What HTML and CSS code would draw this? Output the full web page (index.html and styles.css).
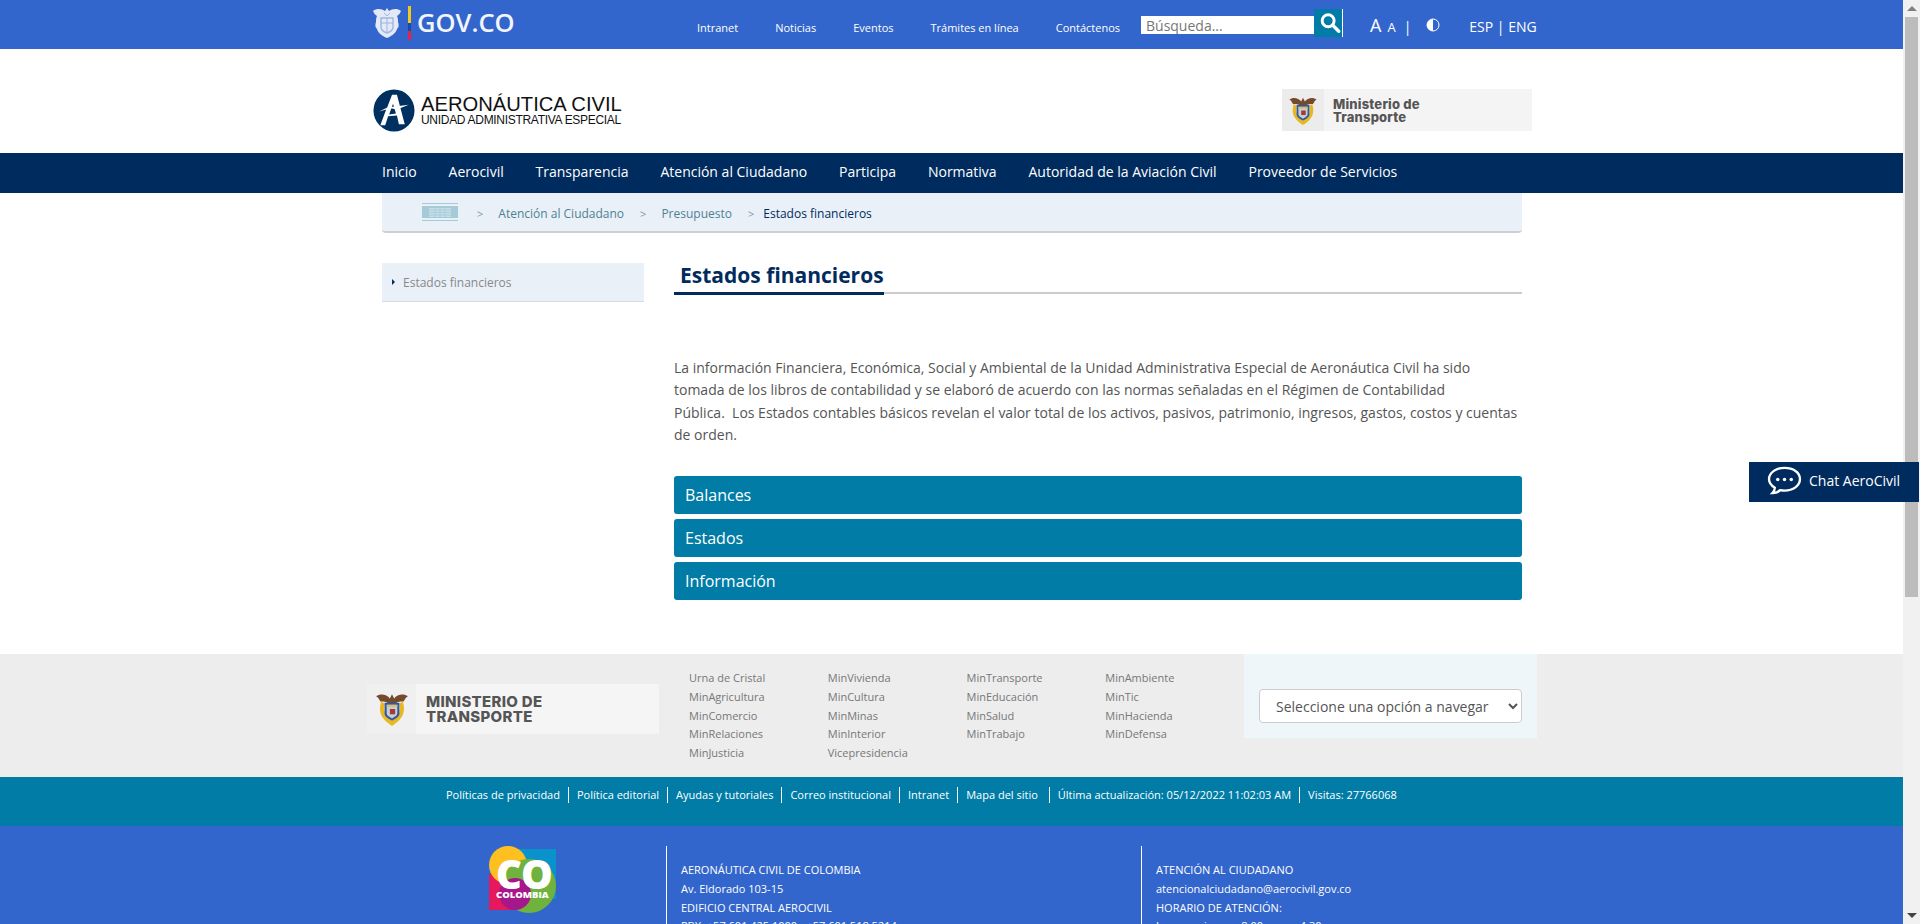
FILE: index.html
```html
<!DOCTYPE html>
<html lang="es">
<head>
    <meta charset="UTF-8">
    <title>Estados financieros - Aerocivil</title>
    <meta name="viewport" content="width=device-width, initial-scale=1">
    <link rel="stylesheet" href="styles.css">
</head>
<body>
<svg class="defs" width="0" height="0">
    <symbol id="escudo" viewBox="0 0 30 34">
        <path d="M15 3l2 4c3-4 9-5 13-2-2 1-3 3-4 5-3 0-6 0-8 2h-6c-2-2-5-2-8-2-1-2-2-4-4-5 4-3 10-2 13 2z" fill="#75492c"/>
        <path d="M5 10c-2 5-2 12 2 16 2 3 5 5 8 7 3-2 6-4 8-7 4-4 4-11 2-16l-3 2c1 5 0 10-3 13-1 1-3 2-4 3-1-1-3-2-4-3-3-3-4-8-3-13z" fill="#e8b823"/>
        <path d="M8 11h14v10c0 3-3 5-7 7-4-2-7-4-7-7z" fill="#2f5aa0"/>
        <path d="M10 13h10v8c0 2-2 3-5 5-3-2-5-3-5-5z" fill="#c9ced6"/>
        <path d="M13 17h5v5h-5z" fill="#a53a34"/>
        <path d="M10 13h10v2H10z" fill="#d9c06a"/>
    </symbol>
</svg>
<div class="page">
    <header class="top-bar">
        <div class="gov-logo">
            <svg class="gov-shield" viewBox="0 0 28 32" width="28" height="32">
                <path d="M14 1l2 3c3-2 8-3 12 0-1 2-2 4-4 5 1 2 1 4 1 6 1 3 1 5-1 7-1 4-5 7-10 9-5-2-9-5-10-9-2-2-2-4-1-7 0-2 0-4 1-6-2-1-3-3-4-5 4-3 9-2 12 0z" fill="#e4e9f6"/>
                <path d="M8 11h12v9c0 3-3 5-6 6-3-1-6-3-6-6z" fill="none" stroke="#9db5e4" stroke-width="1.400"/>
                <path d="M8 16h12M14 11v15M11 6l3 3 3-3" fill="none" stroke="#9db5e4" stroke-width="1"/>
            </svg>
            <span class="gov-stripe"></span>
            <span class="gov-text">GOV.CO</span>
        </div>
        <nav class="top-links">
            <a href="#">Intranet</a>
            <a href="#">Noticias</a>
            <a href="#">Eventos</a>
            <a href="#">Trámites en línea</a>
            <a href="#">Contáctenos</a>
        </nav>
        <form class="search">
            <input type="text" placeholder="Búsqueda...">
            <button type="button" aria-label="Buscar">
                <svg viewBox="0 0 24 24" width="22" height="22"><circle cx="10" cy="9.500" r="6.500" fill="none" stroke="#fff" stroke-width="3.200"/><path d="M15 14.500l6.500 6.500" stroke="#fff" stroke-width="3.600" stroke-linecap="round"/></svg>
            </button>
        </form>
        <div class="top-tools">
            <span class="font-big">A</span>
            <span class="font-small">A</span>
            <span class="bar">|</span>
            <svg class="contrast" viewBox="0 0 14 14" width="14" height="14"><circle cx="7" cy="7" r="6" fill="none" stroke="#fff" stroke-width="1"/><path d="M7 1a6 6 0 0 0 0 12z" fill="#fff"/></svg>
            <span class="langs">ESP <span class="lang-bar">|</span> ENG</span>
        </div>
    </header>

    <div class="brand">
        <div class="aero-logo">
            <svg viewBox="0 0 42 44" width="42" height="43">
                <ellipse cx="21" cy="22" rx="21" ry="21.500" fill="#00305f"/>
                <path d="M19 6h5l8 30h-6l-2-9-9 1-3 9H7l6-16-7 2 8-4z" fill="#fff"/>
                <path d="M20 15l3 10-7 1z" fill="#00305f"/>
                <path d="M14 19l22-3-12 5z" fill="#fff"/>
            </svg>
            <div class="aero-text">
                <div class="aero-name">AERONÁUTICA CIVIL</div>
                <div class="aero-sub">UNIDAD ADMINISTRATIVA ESPECIAL</div>
            </div>
        </div>
        <div class="min-banner">
            <span class="min-icon">
                <svg width="28" height="31"><use href="#escudo"/></svg>
            </span>
            <span class="min-label">Ministerio de<br>Transporte</span>
        </div>
    </div>

    <nav class="main-nav">
        <a href="#">Inicio</a>
        <a href="#">Aerocivil</a>
        <a href="#">Transparencia</a>
        <a href="#">Atención al Ciudadano</a>
        <a href="#">Participa</a>
        <a href="#">Normativa</a>
        <a href="#">Autoridad de la Aviación Civil</a>
        <a href="#">Proveedor de Servicios</a>
    </nav>

    <div class="breadcrumb">
        <svg class="crumb-home" viewBox="0 0 36 18" width="36" height="18">
            <path d="M0 0h36v1H0zM0 17h36v1H0z" fill="#a5cbd9"/>
            <path d="M0 3h36v12H0z" fill="#a5cbd9"/>
            <path d="M7 5h22v9H7z" fill="#c4dde6"/>
            <path d="M7 7h22M7 9.500h22M7 12h22M13 5v9M18 5v9M23 5v9" stroke="#a5cbd9" stroke-width=".8"/>
        </svg>
        <span class="sep">&gt;</span>
        <a href="#">Atención al Ciudadano</a>
        <span class="sep">&gt;</span>
        <a href="#">Presupuesto</a>
        <span class="sep last">&gt;</span>
        <span class="current">Estados financieros</span>
    </div>

    <main class="content">
        <aside class="side-menu">
            <a href="#"><i class="side-arrow"></i>Estados financieros</a>
        </aside>
        <section class="article">
            <div class="title-row"><h1>Estados financieros</h1></div>
            <p>La información Financiera, Económica, Social y Ambiental de la Unidad Administrativa Especial de Aeronáutica Civil ha sido tomada de los libros de contabilidad y se elaboró de acuerdo con las normas señaladas en el Régimen de Contabilidad Pública.&nbsp;&nbsp;Los Estados contables básicos revelan el valor total de los activos, pasivos, patrimonio, ingresos, gastos, costos y cuentas de orden.</p>
            <div class="accordion">
                <a href="#">Balances</a>
                <a href="#">Estados</a>
                <a href="#">Información</a>
            </div>
        </section>
    </main>

    <footer>
        <div class="foot-links">
            <div class="foot-min">
                <span class="foot-min-icon">
                    <svg width="32" height="36"><use href="#escudo"/></svg>
                </span>
                <span class="foot-min-label">MINISTERIO DE<br>TRANSPORTE</span>
            </div>
            <div class="min-grid">
                <ul>
                    <li>Urna de Cristal</li>
                    <li>MinAgricultura</li>
                    <li>MinComercio</li>
                    <li>MinRelaciones</li>
                    <li>MinJusticia</li>
                </ul>
                <ul>
                    <li>MinVivienda</li>
                    <li>MinCultura</li>
                    <li>MinMinas</li>
                    <li>MinInterior</li>
                    <li>Vicepresidencia</li>
                </ul>
                <ul>
                    <li>MinTransporte</li>
                    <li>MinEducación</li>
                    <li>MinSalud</li>
                    <li>MinTrabajo</li>
                </ul>
                <ul>
                    <li>MinAmbiente</li>
                    <li>MinTic</li>
                    <li>MinHacienda</li>
                    <li>MinDefensa</li>
                </ul>
            </div>
            <div class="nav-select">
                <select>
                    <option>Seleccione una opción a navegar</option>
                </select>
            </div>
        </div>

        <div class="foot-bar">
            <a href="#">Políticas de privacidad</a>
            <a href="#">Política editorial</a>
            <a href="#">Ayudas y tutoriales</a>
            <a href="#">Correo institucional</a>
            <a href="#">Intranet</a>
            <a href="#" class="wide">Mapa del sitio</a>
            <span>Última actualización: 05/12/2022 11:02:03 AM</span>
            <span>Visitas: 27766068</span>
        </div>

        <div class="foot-info">
            <div class="co-logo">
                <svg viewBox="0 0 67 67" width="67" height="67">
                    <path d="M20 3h47v50H20z" fill="#0a93cb"/>
                    <path d="M0 28h40v36H0z" fill="#e6195e"/>
                    <circle cx="19" cy="19" r="19" fill="#fdc020"/>
                    <circle cx="40" cy="40" r="27" fill="#6fb23e"/>
                    <circle cx="26" cy="48" r="16" fill="#a5178a"/>
                </svg>
                <span class="co-big">CO</span>
                <span class="co-small">COLOMBIA</span>
            </div>
            <div class="info-col">
                <div>AERONÁUTICA CIVIL DE COLOMBIA</div>
                <div>Av. Eldorado 103-15</div>
                <div>EDIFICIO CENTRAL AEROCIVIL</div>
                <div>PBX: +57 601 425 1000 - +57 601 518 5214</div>
            </div>
            <div class="info-col">
                <div>ATENCIÓN AL CIUDADANO</div>
                <div>atencionalciudadano@aerocivil.gov.co</div>
                <div>HORARIO DE ATENCIÓN:</div>
                <div>Lunes a viernes: 8:00 a.m. a 4:30 p.m.</div>
            </div>
        </div>
    </footer>
</div>

<div class="scrollbar">
    <span class="arrow up"></span>
    <span class="thumb"></span>
    <span class="track"></span>
    <span class="arrow down"></span>
</div>

<a href="#" class="chat">
    <svg viewBox="0 0 36 30" width="35" height="29">
        <path d="M18 2C9 2 2 7 2 13.500c0 4 2.500 7 6 9 0 2-1 4-2.500 5.500 3 0 6-1 8-3 1.500.3 3 .5 4.500.5 9 0 16-5 16-12S27 2 18 2z" fill="none" stroke="#fff" stroke-width="2.400"/>
        <circle cx="11" cy="14" r="1.800" fill="#fff"/><circle cx="18" cy="14" r="1.800" fill="#fff"/><circle cx="25" cy="14" r="1.800" fill="#fff"/>
    </svg>
    Chat AeroCivil
</a>
</body>
</html>
```

FILE: styles.css
```css
:root {
    --blue: #3366cc;
    --navy: #002b5e;
    --teal: #007ca6;
    --pale: #e9f0f8;
    --gray: #ededed;
}
* {
    box-sizing: border-box;
}
html, body {
    height: 100%;
}
body {
    margin: 0;
    overflow: hidden;
    display: flex;
    font-family: 'Open Sans', Arial, sans-serif;
    color: #555;
}
a {
    color: inherit;
    text-decoration: none;
}
.defs {
    position: absolute;
}
.page {
    flex: 1;
    min-width: 0;
    height: 100vh;
    overflow: hidden;
}

/* scrollbar drawn by hand, headless hides the real one */
.scrollbar {
    width: 17px;
    height: 100vh;
    display: flex;
    flex-direction: column;
    background: #f1f1f1;
}
.arrow {
    height: 17px;
    display: flex;
    align-items: center;
    justify-content: center;
}
.arrow::before {
    content: "";
    border-left: 5px solid transparent;
    border-right: 5px solid transparent;
}
.arrow.up::before {
    border-bottom: 5px solid #808080;
}
.arrow.down::before {
    border-top: 5px solid #444;
}
.thumb {
    height: 580px;
    margin: 0 2px;
    background: #bcbcbc;
}
.track {
    flex: 1;
}

/* top bar */
.top-bar {
    height: 49px;
    background: var(--blue);
    padding-left: 373px;
    display: flex;
    color: #fff;
}
.gov-logo {
    display: flex;
    align-items: center;
    width: 324px;
    height: 46px;
}
.gov-stripe {
    width: 3px;
    height: 34px;
    margin-left: 7px;
    background: linear-gradient(#f3c81b 50%, #1a4aa8 50%, #1a4aa8 75%, #e0244e 75%);
}
.gov-text {
    margin-left: 6px;
    font-size: 25.500px;
    font-weight: 600;
    line-height: 1;
    color: #f2f5fc;
}
.top-links {
    display: flex;
    gap: 37px;
    width: 444px;
    padding-top: 20px;
    font-size: 11px;
    line-height: 15px;
    font-weight: 500;
}
.search {
    display: flex;
    align-items: flex-start;
    width: 202px;
    padding-top: 9px;
    margin: 0;
}
.search input {
    width: 173px;
    height: 18px;
    margin-top: 7px;
    padding: 0 5px;
    border: 0;
    background: #fff;
    font-family: inherit;
    font-size: 14px;
}
.search input::placeholder {
    color: #777;
}
.search button {
    width: 29px;
    height: 28px;
    padding: 2px 0 0 3px;
    border: 0;
    border-right: 1px solid #fff;
    background: var(--teal);
}
.top-tools {
    flex: 1;
    display: flex;
    align-items: baseline;
    padding: 14px 0 0 27px;
}
.font-big {
    font-size: 18px;
    line-height: 22px;
}
.font-small {
    margin-left: 6px;
    font-size: 13px;
}
.bar {
    margin-left: 8px;
    font-size: 14px;
}
.contrast {
    align-self: flex-start;
    margin: 4px 0 0 15px;
}
.langs {
    margin-left: 29px;
    font-size: 14px;
}

/* logos */
.brand {
    height: 104px;
    padding: 40px 371px 0 373px;
    display: flex;
    justify-content: space-between;
}
.aero-logo {
    display: flex;
    height: 43px;
}
.aero-text {
    margin-left: 6px;
    padding-top: 6px;
    color: #111;
    font-family: 'Liberation Sans', Arial, sans-serif;
}
.aero-name {
    font-size: 20.200px;
    line-height: 19px;
    white-space: nowrap;
}
.aero-sub {
    font-size: 12px;
    line-height: 12px;
    white-space: nowrap;
    letter-spacing: -.3px;
}
.min-banner {
    display: flex;
    width: 250px;
    height: 42px;
    background: #f4f4f4;
}
.min-icon {
    width: 42px;
    background: #ececec;
    display: flex;
    align-items: center;
    justify-content: center;
}
.min-label {
    margin-left: 9px;
    padding-top: 9px;
    font-family: Inter, Arial, sans-serif;
    font-size: 13px;
    line-height: 13px;
    letter-spacing: .2px;
    font-weight: 800;
    color: #555;
}

/* main menu */
.main-nav {
    height: 40px;
    padding: 0 0 3px 382px;
    display: flex;
    gap: 31.850px;
    align-items: center;
    background: var(--navy);
    color: #fff;
    font-size: 14px;
}

.breadcrumb {
    height: 40px;
    margin: 0 381px 0 382px;
    padding: 2px 0 0 40px;
    display: flex;
    align-items: center;
    background: var(--pale);
    border-bottom: 2px solid #ccd0d5;
    border-radius: 0 0 4px 4px;
    font-size: 12px;
    color: #4f8194;
}
.crumb-home {
    margin: -2px 19px 0 0;
}
.sep {
    margin-right: 15px;
    color: #7b9aa8;
    font-size: 11px;
}
.sep.last {
    margin-right: 9px;
}
.breadcrumb a {
    margin-right: 16px;
}
.current {
    color: var(--navy);
    font-weight: 500;
}

/* content */
.content {
    display: flex;
    height: 421px;
    padding: 30px 381px 0 382px;
}
.side-menu {
    width: 262px;
    margin-right: 30px;
}
.side-menu a {
    display: flex;
    align-items: center;
    height: 39px;
    padding-left: 10px;
    background: var(--pale);
    border-bottom: 1px solid #d8dce0;
    font-size: 12px;
    color: #888;
}
.side-arrow {
    width: 0;
    height: 0;
    margin-right: 8px;
    border-left: 3px solid var(--navy);
    border-top: 3px solid transparent;
    border-bottom: 3px solid transparent;
}
.article {
    flex: 1;
}
.title-row {
    height: 31px;
    border-bottom: 2px solid #ccc;
}
.title-row h1 {
    display: inline-block;
    height: 32px;
    margin: 0;
    padding: 0 0 0 6px;
    border-bottom: 3px solid var(--navy);
    color: var(--navy);
    font-size: 21px;
    line-height: 24px;
    font-weight: 700;
}
.article p {
    margin: 63px 0 0;
    font-size: 14px;
    line-height: 22.400px;
    color: #555;
}
.accordion {
    margin-top: 29px;
    display: flex;
    flex-direction: column;
    gap: 5px;
}
.accordion a {
    height: 38px;
    padding-left: 11px;
    background: var(--teal);
    border-radius: 3px;
    color: #fff;
    font-size: 16px;
    line-height: 38px;
}

/* footer */
.foot-links {
    height: 123px;
    display: flex;
    background: var(--gray);
    padding-left: 367px;
}
.foot-min {
    display: flex;
    width: 292px;
    height: 50px;
    margin-top: 30px;
    background: #f5f5f5;
}
.foot-min-icon {
    width: 49px;
    display: flex;
    align-items: center;
    justify-content: center;
    background: #f0f0f0;
}
.foot-min-label {
    margin-left: 10px;
    padding-top: 10px;
    font-family: Inter, Arial, sans-serif;
    font-size: 15px;
    line-height: 15px;
    letter-spacing: .3px;
    font-weight: 800;
    color: #555;
}
.min-grid {
    display: flex;
    width: 585px;
    padding: 15px 0 0 30px;
}
.min-grid ul {
    width: 138.800px;
    margin: 0;
    padding: 0;
    list-style: none;
}
.min-grid li {
    font-size: 11px;
    line-height: 18.750px;
    color: #777;
}
.nav-select {
    width: 293px;
    height: 84px;
    padding: 35px 0 0 15px;
    background: #eef6f9;
}
.nav-select select {
    width: 263px;
    height: 34px;
    padding-left: 12px;
    border: 1px solid #ccc;
    border-radius: 4px;
    background: #fff;
    font-family: inherit;
    font-size: 14px;
    color: #555;
}
.foot-bar {
    height: 49px;
    padding: 10px 0 0 446px;
    display: flex;
    align-items: flex-start;
    background: var(--teal);
    color: #fff;
    font-size: 11px;
    font-weight: 500;
    line-height: 16px;
}
.foot-bar a, .foot-bar span {
    padding-right: 8px;
    margin-right: 8px;
    border-right: 1px solid #fff;
    white-space: nowrap;
}
.foot-bar a.wide {
    padding-right: 11px;
}
.foot-bar span:last-child {
    border: 0;
}
.foot-info {
    height: 592px;
    display: flex;
    padding: 20px 0 0 489px;
    background: var(--blue);
    color: #fff;
    font-size: 11px;
    font-weight: 500;
    line-height: 18.750px;
}
.co-logo {
    position: relative;
    width: 177px;
    height: 67px;
}
.co-big {
    position: absolute;
    left: 7px;
    top: 8px;
    color: #fff;
    font-size: 40px;
    line-height: 40px;
    font-weight: 800;
    letter-spacing: -1px;
}
.co-small {
    position: absolute;
    left: 7px;
    top: 43px;
    color: #fff;
    font-size: 9.500px;
    line-height: 12px;
    font-weight: 800;
}
.info-col {
    width: 475px;
    height: 300px;
    padding: 15px 0 0 14px;
    border-left: 1px solid #fff;
}

.chat {
    position: fixed;
    top: 462px;
    right: 1px;
    width: 170px;
    height: 40px;
    padding: 0 0 3px 18px;
    display: flex;
    align-items: center;
    gap: 7px;
    background: var(--navy);
    color: #fff;
    font-size: 14px;
}
```
